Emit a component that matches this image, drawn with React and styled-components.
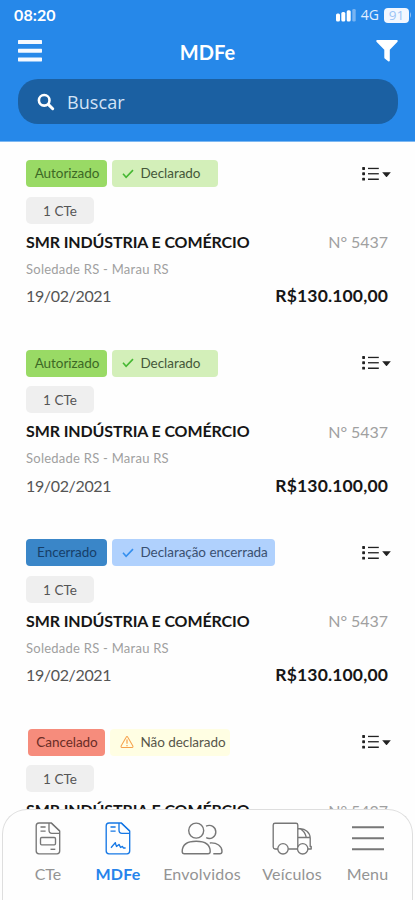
import React from "react";
import styled, { createGlobalStyle } from "styled-components";

const Global = createGlobalStyle`
  * { box-sizing: border-box; }
  html, body { margin: 0; padding: 0; background: #fff; }
  body { font-family: Lato, "Open Sans", sans-serif; overflow: hidden; }
  svg { display: block; flex: none; }
`;

const Screen = styled.main`
  display: flex;
  flex-direction: column;
  width: 415px;
  height: 900px;
  overflow: hidden;
  background: #fefefe;
`;

const Header = styled.header`
  flex: none;
  height: 142px;
  background: #2688e9;
  border-bottom: 1px solid #7db8f2;
  color: #fff;
`;

const StatusBar = styled.div`
  display: flex;
  justify-content: space-between;
  align-items: center;
  height: 30px;
  padding: 0 3px 0 14px;
`;

const Clock = styled.span`
  font: 700 16px/30px Lato, sans-serif;
  letter-spacing: 0.1px;
`;

const Signals = styled.div`
  display: flex;
  align-items: center;
  height: 30px;
`;

const Network = styled.span`
  margin: 0 5px 0 5px;
  font: 400 14px/28px "Open Sans", sans-serif;
  color: #e2efff;
`;

const Battery = styled.span`
  width: 25px;
  height: 15px;
  border-radius: 4px;
  background: #f2f7ff;
  color: #9cc4f5;
  font: 400 13.5px/14px "Open Sans", sans-serif;
  text-align: center;
`;

const TitleBar = styled.div`
  display: flex;
  justify-content: space-between;
  align-items: center;
  height: 42px;
  padding: 0 17px 0 18px;
`;

const Title = styled.h1`
  margin: 2px 3px 0 0;
  font: 700 20px/24px Lato, sans-serif;
  letter-spacing: 0.1px;
`;

const Search = styled.div`
  display: flex;
  align-items: center;
  gap: 12px;
  width: 380px;
  height: 45px;
  margin: 7px 0 0 18px;
  padding-left: 19px;
  border-radius: 20px;
  background: #1b60a2;
`;

const SearchLabel = styled.span`
  font: 400 18px/24px "Open Sans", sans-serif;
  color: #d3e3f6;
  letter-spacing: 0.1px;
`;

const List = styled.section`
  flex: none;
  height: 667px;
  overflow: hidden;
  padding: 18.1px 27px 0 26px;
`;

const Card = styled.article`
  height: 189.5px;
`;

const Row = styled.div`
  display: flex;
  justify-content: space-between;
  align-items: center;
  height: ${(p) => p.$h}px;
`;

const Badges = styled.div`
  display: flex;
  gap: 5px;
`;

const palette = {
  authorized: ["#99da65", "#3d6825"],
  declared: ["#d3efb9", "#45583a"],
  closed: ["#3a86c8", "#173f68"],
  closedDeclared: ["#b0d1fd", "#3a5070"],
  cancelled: ["#f68c7c", "#692d26"],
  undeclared: ["#fffee3", "#57564a"],
};

const Badge = styled.span`
  display: flex;
  align-items: center;
  justify-content: ${(p) => (p.$icon ? "flex-start" : "center")};
  gap: 7px;
  width: ${(p) => p.$w}px;
  height: 27px;
  margin-left: ${(p) => p.$indent || 0}px;
  padding-left: ${(p) => (p.$icon ? 9.5 : 1)}px;
  border-radius: 4px;
  background: ${(p) => palette[p.$tone][0]};
  color: ${(p) => palette[p.$tone][1]};
  font-size: 13.5px;
  line-height: 27px;
  white-space: nowrap;
  letter-spacing: -0.05px;
`;

const Count = styled.div`
  width: 68px;
  height: 27px;
  margin: 9.5px 0 4px;
  border-radius: 5px;
  background: #efefef;
  color: #555;
  font-size: 13.5px;
  line-height: 28px;
  text-align: center;
`;

const Company = styled.h2`
  margin: 0;
  font-size: 16px;
  line-height: 28px;
  font-weight: 700;
  letter-spacing: -0.11px;
  color: #161616;
`;

const Num = styled.span`
  font-size: 16px;
  color: #a0a0a0;
  letter-spacing: -0.05px;
`;

const Route = styled.span`
  font-size: 13px;
  color: #a0a0a0;
  letter-spacing: 0.25px;
`;

const DateText = styled.span`
  font-size: 16px;
  color: #555;
  letter-spacing: -0.35px;
`;

const Amount = styled.strong`
  font-size: 17.5px;
  letter-spacing: 0.15px;
  color: #161616;
`;

const TabBar = styled.nav`
  flex: none;
  width: 411px;
  height: 91px;
  margin-left: 2px;
  display: grid;
  grid-template-columns: 80px 60px 108px 72px 79px;
  padding: 12px 0 0 5px;
  border: 1.5px solid #dedede;
  border-bottom: 0;
  border-radius: 25px 25px 0 0;
  background: #fefefe;
`;

const Tab = styled.div`
  display: flex;
  flex-direction: column;
  align-items: center;
  color: ${(p) => (p.$active ? "#1678e5" : "#777")};
`;

const TabLabel = styled.span`
  margin-top: 7px;
  font-size: 16px;
  line-height: 24px;
  font-weight: ${(p) => (p.$bold ? 700 : 400)};
  letter-spacing: ${(p) => p.$track || 0}px;
  color: ${(p) => (p.$bold ? "#2583eb" : "#949494")};
`;

const SignalIcon = () => (
  <svg width="20" height="13" viewBox="0 0 20 13" fill="#fff">
    <rect x="0" y="4.5" width="4" height="8" rx="1.5" />
    <rect x="5.3" y="3" width="4" height="9.5" rx="1.5" />
    <rect x="10.7" y="1.2" width="4" height="11.3" rx="1.5" />
    <rect x="16.3" y="0" width="3.4" height="12.5" rx="1.3" fill="#78b4f2" />
  </svg>
);

const BatteryTip = () => (
  <svg width="3" height="6" viewBox="0 0 3 6"><path d="M1 0Q3 3 1 6Z" fill="#8fc1f5" /></svg>
);

const MenuIcon = () => (
  <svg width="24" height="22" viewBox="0 0 24 22" fill="#f5f9ff">
    <rect y="0" width="24" height="4" rx=".6" />
    <rect y="8.7" width="24" height="4" rx=".6" />
    <rect y="17.4" width="24" height="4" rx=".6" />
  </svg>
);

const FilterIcon = () => (
  <svg width="22" height="22" viewBox="0 0 22 22" fill="#fff">
    <path d="M.8 0H21.2Q22.2 1 21.3 2L13.8 9.7V20.8Q13.4 22 12.2 21.3L9 18.7Q8.3 18.1 8.3 17.4V9.7L.7 2Q-.2 1 .8 0Z" />
  </svg>
);

const SearchIcon = () => (
  <svg width="18" height="18" viewBox="0 0 18 18" fill="none" stroke="#fff" strokeLinecap="round">
    <circle cx="7.2" cy="7.3" r="5.3" strokeWidth="2.6" />
    <path d="M11.5 11.6 15.7 15.7" strokeWidth="3" />
  </svg>
);

const CheckIcon = ({ color }) => (
  <svg width="12" height="10" viewBox="0 0 12 10" fill="none" stroke={color} strokeWidth="1.6">
    <path d="M1 4.7 4.1 8.2 11 1.1" />
  </svg>
);

const WarningIcon = () => (
  <svg width="14" height="14" viewBox="0 0 15 14" fill="none" stroke="#f6a14b" strokeLinejoin="round">
    <path d="M7.5 1.2Q8 1.2 8.4 2L13.8 11.4Q14.2 12.7 13 12.8H2Q.8 12.7 1.2 11.4L6.6 2Q7 1.2 7.5 1.2Z" strokeWidth="1.1" />
    <path d="M7.5 4.3V8.8M7.5 10.1V11.5" strokeWidth="1.3" />
  </svg>
);

const ListIcon = () => (
  <svg width="30" height="14" viewBox="0 0 30 14" fill="#222">
    <rect x=".2" y="0" width="2.8" height="2.9" rx=".6" />
    <rect x=".2" y="5.3" width="2.8" height="2.9" rx=".6" />
    <rect x=".2" y="10.7" width="2.8" height="2.9" rx=".6" />
    <rect x="6" y=".8" width="10.8" height="1.3" />
    <rect x="6" y="6.1" width="10.8" height="1.3" />
    <rect x="6" y="11.5" width="10.8" height="1.5" />
    <path d="M20.2 5.3H28.8L25 9.7Q24.5 10.2 24 9.7Z" />
  </svg>
);

const ListMenu = styled.div`
  display: flex;
  margin-right: -4px;
`;

const DocIcon = ({ signed }) => (
  <svg width="26" height="33" viewBox="0 0 26 33" fill="none" stroke="currentColor" strokeWidth="1.35" strokeLinejoin="round">
    <path d="M4 1H16.3L24.7 9V29Q24.7 31.8 22 31.8H4Q1.2 31.8 1.2 29V4Q1.2 1 4 1Z" />
    <path d="M14 1V8Q14 11.3 17 11.3H24.5M16.3 1 24.7 9" />
    <path d="M5.5 5H10.6M5.5 9.1H10.6" />
    {signed ? (
      <path d="M6 25.7 10.3 20.6Q11.1 23.8 11.5 24.5L14 22.4 15.6 25.5 17.4 24.4 18.4 26H20.6" />
    ) : (
      <>
        <rect x="5.5" y="15.5" width="15" height="7.3" rx="1.2" />
        <path d="M15.5 27.3H20.3" />
      </>
    )}
  </svg>
);

const PeopleIcon = () => (
  <svg width="42" height="33" viewBox="0 0 42 33" fill="none" stroke="currentColor" strokeWidth="1.4">
    <circle cx="15.2" cy="8.6" r="7.5" />
    <path d="M1.2 29.5C1.2 22.5 6.6 19.2 15.2 19.2S29.2 22.5 29.2 29.5Q29.2 31.8 27 31.8H3.3Q1.2 31.8 1.2 29.5Z" />
    <path d="M25 4.1C30 1.9 34.8 5 34.8 10S29.6 18 25.2 15.7M28.8 21C36 20.3 41 24.4 41 29.2Q41 31.8 38.7 31.8H32.3" />
  </svg>
);

const TruckIcon = () => (
  <svg width="41" height="33" viewBox="0 0 41 33" fill="none" stroke="currentColor" strokeWidth="1.35" strokeLinejoin="round">
    <path d="M6 27H3Q1.2 26.8 1.2 25V3Q1.2 1.2 3 1.2H24Q25.8 1.2 25.8 3V25M16.2 27H25.5M35.8 27H39.2V24.5H38.2V16C38 10.5 33 6.7 28.5 6.7H26M26 15.5H38M28.5 6.8Q33 9.5 34.3 15.3" />
    <circle cx="11" cy="26.8" r="5.2" />
    <circle cx="30.7" cy="26.8" r="5.2" />
  </svg>
);

const MoreIcon = () => (
  <svg width="32" height="33" viewBox="0 0 32 33" fill="none" stroke="currentColor" strokeWidth="2">
    <path d="M0 5.2H32M0 16.2H32M0 27.3H32" />
  </svg>
);

const green = "#46b833";
const manifests = [
  { status: { tone: "authorized", w: 81, text: "Autorizado" }, decl: { tone: "declared", w: 105.5, text: "Declarado", icon: <CheckIcon color={green} /> } },
  { status: { tone: "authorized", w: 81, text: "Autorizado" }, decl: { tone: "declared", w: 105.5, text: "Declarado", icon: <CheckIcon color={green} /> } },
  { status: { tone: "closed", w: 81, text: "Encerrado" }, decl: { tone: "closedDeclared", w: 163, text: "Declaração encerrada", icon: <CheckIcon color="#348fee" /> } },
  { status: { tone: "cancelled", w: 77, indent: 2, text: "Cancelado" }, decl: { tone: "undeclared", w: 120, text: "Não declarado", icon: <WarningIcon /> }, collapsed: true },
];

const Manifest = ({ status, decl, collapsed }) => (
  <Card>
    <Row $h={27}>
      <Badges>
        <Badge $tone={status.tone} $w={status.w} $indent={status.indent}>{status.text}</Badge>
        <Badge $tone={decl.tone} $w={decl.w} $icon>{decl.icon}{decl.text}</Badge>
      </Badges>
      <ListMenu><ListIcon /></ListMenu>
    </Row>
    <Count>1 CTe</Count>
    <Row $h={28}>
      <Company>SMR INDÚSTRIA E COMÉRCIO</Company>
      <Num>N° 5437</Num>
    </Row>
    {!collapsed && (
      <>
        <Row $h={26}><Route>Soledade RS - Marau RS</Route></Row>
        <Row $h={28}>
          <DateText>19/02/2021</DateText>
          <Amount>R$130.100,00</Amount>
        </Row>
      </>
    )}
  </Card>
);

export default function App() {
  return (
    <Screen>
      <Global />
      <Header>
        <StatusBar>
          <Clock>08:20</Clock>
          <Signals><SignalIcon /><Network>4G</Network><Battery>91</Battery><BatteryTip /></Signals>
        </StatusBar>
        <TitleBar><MenuIcon /><Title>MDFe</Title><FilterIcon /></TitleBar>
        <Search><SearchIcon /><SearchLabel>Buscar</SearchLabel></Search>
      </Header>
      <List>{manifests.map((m, i) => <Manifest key={i} {...m} />)}</List>
      <TabBar>
        <Tab><DocIcon /><TabLabel>CTe</TabLabel></Tab>
        <Tab $active><DocIcon signed /><TabLabel $bold $track={0.2}>MDFe</TabLabel></Tab>
        <Tab><PeopleIcon /><TabLabel $track={0.2}>Envolvidos</TabLabel></Tab>
        <Tab><TruckIcon /><TabLabel $track={0.15}>Veículos</TabLabel></Tab>
        <Tab><MoreIcon /><TabLabel $track={0.1}>Menu</TabLabel></Tab>
      </TabBar>
    </Screen>
  );
}
